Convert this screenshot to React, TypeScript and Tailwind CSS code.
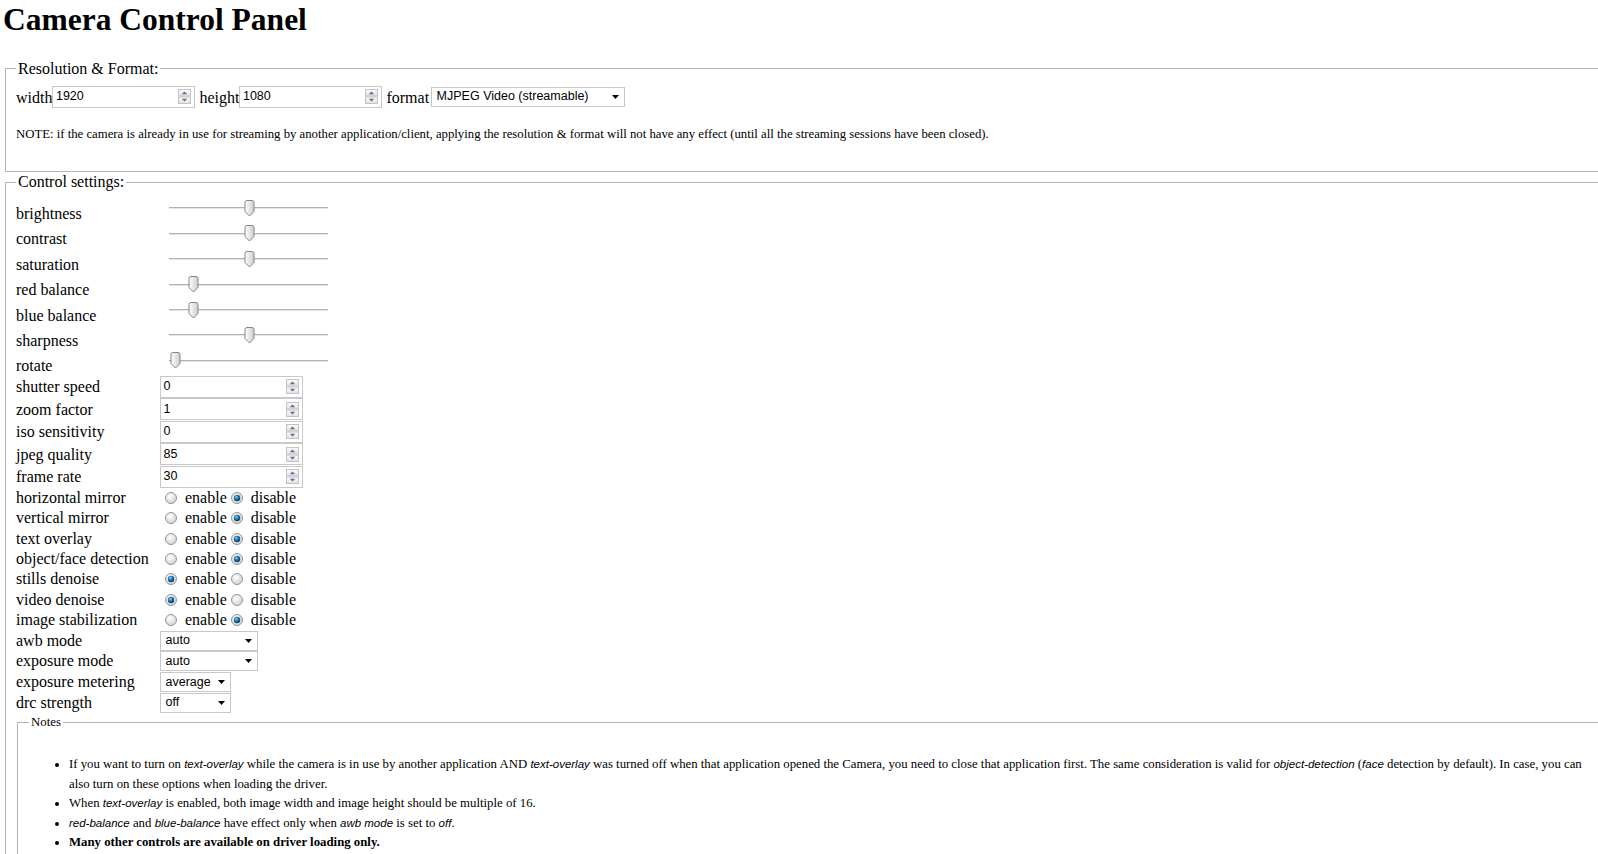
import React from 'react';

const serif = "font-['Liberation_Serif','Times_New_Roman',serif]";
const sans = "font-['Liberation_Sans',Arial,sans-serif]";
const em = "font-['Liberation_Sans',Arial,sans-serif] italic text-[11.5px]";

const sliders: [string, number][] = [
  ['brightness', 0.5],
  ['contrast', 0.5],
  ['saturation', 0.5],
  ['red balance', 0.125],
  ['blue balance', 0.125],
  ['sharpness', 0.5],
  ['rotate', 0],
];

const numbers: [string, string][] = [
  ['shutter speed', '0'],
  ['zoom factor', '1'],
  ['iso sensitivity', '0'],
  ['jpeg quality', '85'],
  ['frame rate', '30'],
];

const toggles: [string, boolean][] = [
  ['horizontal mirror', false],
  ['vertical mirror', false],
  ['text overlay', false],
  ['object/face detection', false],
  ['stills denoise', true],
  ['video denoise', true],
  ['image stabilization', false],
];

function Spinner() {
  return (
    <svg width="13" height="15" viewBox="0 0 13 15" className="shrink-0">
      <defs>
        <linearGradient id="spin" x1="0" y1="0" x2="0" y2="1">
          <stop offset="0" stopColor="#fbfbfb" />
          <stop offset="1" stopColor="#e1e1e1" />
        </linearGradient>
      </defs>
      <rect x="0.5" y="0.5" width="12" height="6.5" fill="url(#spin)" stroke="#c3c3c3" />
      <rect x="0.5" y="8" width="12" height="6.5" fill="url(#spin)" stroke="#c3c3c3" />
      <path d="M3.8 5.2 L6.5 2.4 L9.2 5.2 Z" fill="#5a70a3" />
      <path d="M3.8 9.8 L6.5 12.6 L9.2 9.8 Z" fill="#5a70a3" />
    </svg>
  );
}

function NumberBox({ value }: { value: string }) {
  return (
    <div
      className={`flex h-[22px] w-[143px] shrink-0 items-center justify-between border border-[#c8c8c8] bg-white pl-[2.5px] pr-[3px] ${sans} text-[12.5px]`}
    >
      <span>{value}</span>
      <Spinner />
    </div>
  );
}

function SelectBox({ value, className }: { value: string; className: string }) {
  return (
    <div
      className={`flex h-[20px] shrink-0 items-center justify-between border border-[#c8c8c8] bg-white pl-[4.5px] pr-[5px] ${sans} text-[12.5px] ${className}`}
    >
      <span>{value}</span>
      <svg width="7" height="4" viewBox="0 0 7 4">
        <path d="M0 0 H7 L3.5 4 Z" fill="#000" />
      </svg>
    </div>
  );
}

function Radio({ checked }: { checked: boolean }) {
  return (
    <svg width="12" height="12" viewBox="0 0 12 12" className="shrink-0">
      <defs>
        <radialGradient id="rbg" cx="0.4" cy="0.35" r="0.7">
          <stop offset="0" stopColor="#ffffff" />
          <stop offset="1" stopColor="#cfcfcf" />
        </radialGradient>
        <radialGradient id="rdot" cx="0.4" cy="0.35" r="0.7">
          <stop offset="0" stopColor="#86d6f8" />
          <stop offset="0.5" stopColor="#1b6da5" />
          <stop offset="1" stopColor="#08365c" />
        </radialGradient>
      </defs>
      <circle cx="6" cy="6" r="5.5" fill="url(#rbg)" stroke="#959595" />
      {checked && <circle cx="6" cy="6" r="3.2" fill="url(#rdot)" />}
    </svg>
  );
}

function Slider({ frac }: { frac: number }) {
  return (
    <div className="relative ml-[9px] mt-[2.3px] h-[17px] w-[159px] self-start">
      <div className="absolute left-0 right-0 top-[7.5px] h-[2px] border-t border-[#b2b2b2] bg-[#e6e6e6]" />
      <svg
        width="11"
        height="17"
        viewBox="0 0 11 17"
        className="absolute top-0"
        style={{ left: 1 + frac * 147 }}
      >
        <defs>
          <linearGradient id="thumb" x1="0" y1="0" x2="1" y2="0">
            <stop offset="0" stopColor="#ffffff" />
            <stop offset="1" stopColor="#cdcdcd" />
          </linearGradient>
        </defs>
        <path
          d="M1 2.5 Q1 0.5 3 0.5 H8 Q10 0.5 10 2.5 V11.5 L5.5 16 L1 11.5 Z"
          fill="url(#thumb)"
          stroke="#858585"
        />
      </svg>
    </div>
  );
}

export default function App() {
  return (
    <div className={`overflow-hidden bg-white text-black ${serif}`}>
      <div className="w-[1616px]">
        <h1 className="mt-[2px] pl-[3px] text-[31.5px] font-bold leading-[36px]">Camera Control Panel</h1>

        <fieldset className="mx-[5px] mt-[21.5px] border border-[#b4b4b4] px-[10px] pt-[8px] pb-[29.5px]">
          <legend className="px-[2px] text-[16px] leading-[18px]">Resolution &amp; Format:</legend>
          <div className="flex h-[22px] items-center text-[16px]">
            <span className="pt-[2px]">width</span>
            <NumberBox value="1920" />
            <span className="ml-[4px] pt-[2px]">height</span>
            <NumberBox value="1080" />
            <span className="ml-[4px] pt-[2px]">format</span>
            <SelectBox value="MJPEG Video (streamable)" className="ml-[2px] w-[194px]" />
          </div>
          <p className="mt-[19px] text-[12.75px] leading-[15px]">
            NOTE: if the camera is already in use for streaming by another application/client, applying the
            resolution &amp; format will not have any effect (until all the streaming sessions have been closed).
          </p>
        </fieldset>

        <fieldset className="mx-[5px] mt-[1px] border border-[#b4b4b4] px-[10px] pt-[6.7px] pb-[20px]">
          <legend className="px-[2px] text-[16px] leading-[18px]">Control settings:</legend>

          <div className="text-[16px]">
            {sliders.map(([label, f]) => (
              <div key={label} className="flex h-[25.4px] items-end">
                <span className="w-[144px] shrink-0 leading-[18px]">{label}</span>
                <Slider frac={f} />
              </div>
            ))}

            {numbers.map(([label, v]) => (
              <div key={label} className="flex h-[22.5px] items-center">
                <span className="w-[144px] shrink-0 pt-[1px] leading-[18px]">{label}</span>
                <NumberBox value={v} />
              </div>
            ))}

            {toggles.map(([label, on]) => (
              <div key={label} className="flex h-[20.35px] items-center">
                <span className="w-[144px] shrink-0 leading-[18px]">{label}</span>
                <span className="ml-[5px] flex">
                  <Radio checked={on} />
                </span>
                <span className="ml-[8px] leading-[18px]">enable</span>
                <span className="ml-[4.5px] flex">
                  <Radio checked={!on} />
                </span>
                <span className="ml-[7.5px] leading-[18px]">disable</span>
              </div>
            ))}

            <div className="flex h-[20.7px] items-center">
              <span className="w-[144px] shrink-0 leading-[18px]">awb mode</span>
              <SelectBox value="auto" className="w-[98px]" />
            </div>
            <div className="flex h-[20.7px] items-center">
              <span className="w-[144px] shrink-0 leading-[18px]">exposure mode</span>
              <SelectBox value="auto" className="w-[98px]" />
            </div>
            <div className="flex h-[20.7px] items-center">
              <span className="w-[144px] shrink-0 leading-[18px]">exposure metering</span>
              <SelectBox value="average" className="w-[70.5px]" />
            </div>
            <div className="flex h-[20.7px] items-center">
              <span className="w-[144px] shrink-0 leading-[18px]">drc strength</span>
              <SelectBox value="off" className="w-[70.5px]" />
            </div>
          </div>

          <fieldset className="ml-[1px] mt-[1.5px] border border-[#b4b4b4] pl-[11px] pr-[12px] pt-[25.5px] pb-[16px]">
            <legend className="px-[2px] text-[12.8px] leading-[15px]">Notes</legend>
            <ul className="list-disc pl-[40px] text-[12.8px] leading-[19.5px]">
              <li>
                If you want to turn on <i className={em}>text-overlay</i> while the camera is in use by another
                application AND <i className={em}>text-overlay</i> was turned off when that application opened the
                Camera, you need to close that application first. The same consideration is valid for{' '}
                <i className={em}>object-detection</i> (<i className={em}>face</i> detection by default). In case,
                you can also turn on these options when loading the driver.
              </li>
              <li>
                When <i className={em}>text-overlay</i> is enabled, both image width and image height should be
                multiple of 16.
              </li>
              <li>
                <i className={em}>red-balance</i> and <i className={em}>blue-balance</i> have effect only when{' '}
                <i className={em}>awb mode</i> is set to <i className={em}>off</i>.
              </li>
              <li>
                <b>Many other controls are available on driver loading only.</b>
              </li>
            </ul>
          </fieldset>
        </fieldset>
      </div>
    </div>
  );
}
